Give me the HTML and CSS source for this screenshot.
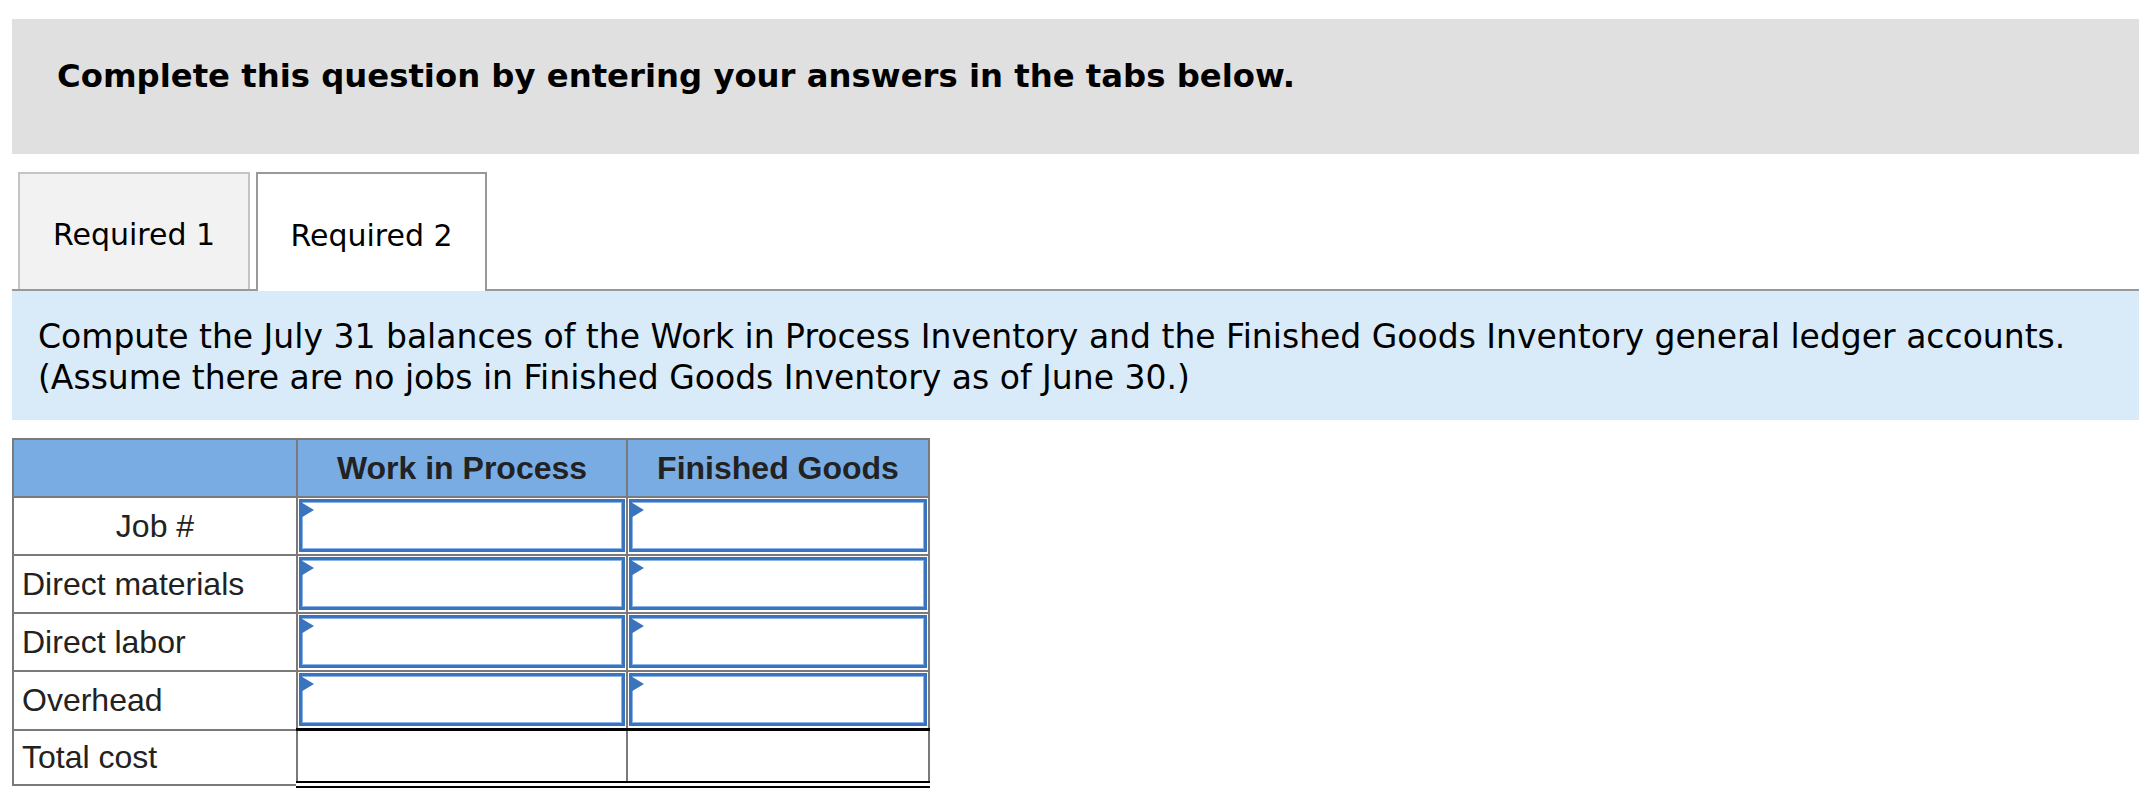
FILE: index.html
```html
<!DOCTYPE html>
<html lang="en">
<head>
<meta charset="utf-8">
<title>Required 2</title>
<link rel="stylesheet" href="styles.css">
</head>
<body>
<div class="page">
  <div class="banner">
    <h2 class="banner-title">Complete this question by entering your answers in the tabs below.</h2>
  </div>

  <div class="tabs">
    <div class="tab">Required 1</div>
    <div class="tab tab-active">Required 2</div>
  </div>

  <div class="prompt">
    <p class="prompt-text">Compute the July 31 balances of the Work in Process Inventory and the Finished Goods Inventory general ledger accounts.<br>(Assume there are no jobs in Finished Goods Inventory as of June 30.)</p>
  </div>

  <table class="grid">
    <colgroup>
      <col class="c-label">
      <col class="c-wip">
      <col class="c-fg">
    </colgroup>
    <thead>
      <tr>
        <th></th>
        <th>Work in Process</th>
        <th>Finished Goods</th>
      </tr>
    </thead>
    <tbody>
      <tr>
        <td class="label center">Job #</td>
        <td class="in"><div class="field"></div></td>
        <td class="in"><div class="field"></div></td>
      </tr>
      <tr>
        <td class="label">Direct materials</td>
        <td class="in"><div class="field"></div></td>
        <td class="in"><div class="field"></div></td>
      </tr>
      <tr>
        <td class="label">Direct labor</td>
        <td class="in"><div class="field"></div></td>
        <td class="in"><div class="field"></div></td>
      </tr>
      <tr>
        <td class="label">Overhead</td>
        <td class="in"><div class="field"></div></td>
        <td class="in"><div class="field"></div></td>
      </tr>
      <tr class="total">
        <td class="label">Total cost</td>
        <td class="sum"></td>
        <td class="sum"></td>
      </tr>
    </tbody>
  </table>
</div>
</body>
</html>
```

FILE: styles.css
```css
html, body {
  margin: 0;
  padding: 0;
  background: #ffffff;
}

.page {
  padding: 19px 8px 0 12px;
  font-family: "DejaVu Sans", Verdana, sans-serif;
  color: #000;
}

.banner {
  background: #e0e0e0;
  height: 135px;
  box-sizing: border-box;
  padding: 37px 0 0 45px;
}

.banner-title {
  margin: 0;
  font-size: 32.3px;
  line-height: 40px;
  font-weight: bold;
}

.tabs {
  margin-top: 18px;
  display: flex;
  gap: 6px;
  padding-left: 6px;
  border-bottom: 2px solid #999999;
  height: 117px;
}

.tab {
  width: 232px;
  box-sizing: border-box;
  background: #f2f2f2;
  border: 2px solid #c4c4c4;
  border-bottom: none;
  display: flex;
  align-items: center;
  justify-content: center;
  font-size: 30px;
  padding-top: 5px;
}

.tab-active {
  width: 231px;
  background: #ffffff;
  border-color: #999999;
  height: 119px;
}

.prompt {
  background: #d9ebf9;
  height: 129px;
  box-sizing: border-box;
  padding: 25px 0 0 26px;
}

.prompt-text {
  margin: 0;
  font-size: 33px;
  line-height: 41px;
}

.grid {
  margin-top: 18px;
  border-collapse: collapse;
  font-family: "Liberation Sans", Arial, sans-serif;
  color: #222222;
  font-size: 32px;
  table-layout: fixed;
  width: 916px;
}

.c-label { width: 284px; }
.c-wip { width: 330px; }
.c-fg { width: 302px; }

.grid th,
.grid td {
  border: 2px solid #7a7a7a;
  height: 58px;
  padding: 0;
  box-sizing: border-box;
}

.grid th {
  background: #7aace4;
  font-weight: bold;
  text-align: center;
  vertical-align: middle;
}

.label {
  padding-left: 8px !important;
  text-align: left;
}

.label.center {
  text-align: center;
  padding-left: 0 !important;
}

.in {
  vertical-align: top;
}

.field {
  position: relative;
  height: 53px;
  margin: 1px 1px 2px 1px;
  box-sizing: border-box;
  border: 3px solid #3a74bd;
  box-shadow: inset 0 0 0 1px #8cb4e6;
  background: #ffffff;
}

.field::before {
  content: "";
  position: absolute;
  left: -3px;
  top: -1px;
  width: 0;
  height: 0;
  border-top: 9px solid transparent;
  border-bottom: 9px solid transparent;
  border-left: 15px solid #3a74bd;
}

.total td {
  height: 55px;
}

.total .sum {
  border-top: 3px solid #000000;
  border-bottom: 7px double #000000;
}
```
